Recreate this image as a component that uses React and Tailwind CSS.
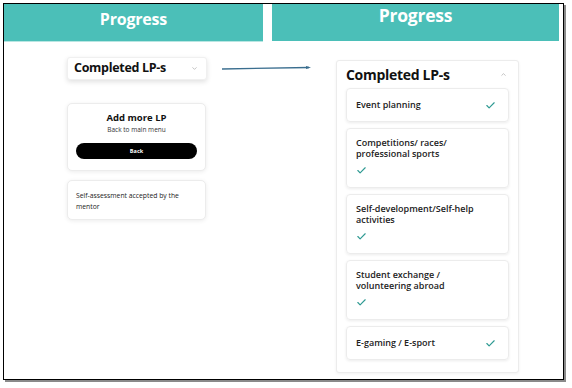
import { Check, ChevronDown, ChevronUp } from 'lucide-react';

const items = [
  { label: 'Event planning', inline: true },
  { label: ['Competitions/ races/', 'professional sports'] },
  { label: ['Self-development/Self-help', 'activities'] },
  { label: ['Student exchange /', 'volunteering abroad'] },
  { label: 'E-gaming / E-sport', inline: true },
];

const App = () => {
  return (
    <div className="relative w-[572px] h-[388px] bg-white font-['Open_Sans',sans-serif] overflow-hidden">
      <div className="absolute left-[3px] top-[3px] w-[561px] h-[377px] border border-black shadow-[2px_2px_0_#8a8a8a]" />
      <div className="relative flex pt-[4px] pl-[4px] gap-[9px]">
        {/* left mock */}
        <div className="w-[259px] flex flex-col">
          <div className="h-[38px] bg-[#4bbfb8] border-b border-[#b8e6e2] flex justify-center pt-[4px]">
            <span className="text-white font-bold text-[16px] leading-[22px] tracking-[-0.2px]">Progress</span>
          </div>
          <div className="pl-[63px] pt-[15px] flex flex-col">
            <div className="w-[140px] h-[23px] bg-white rounded-[3px] shadow-[0_2px_5px_rgba(0,0,0,0.12)] border border-[#f0f0f0] flex items-center justify-between pl-[6px] pr-[8px]">
              <span className="text-[12.5px] font-bold text-[#111] tracking-[-0.3px]">Completed LP-s</span>
              <ChevronDown size={7} className="text-[#999]" strokeWidth={2} />
            </div>
            <div className="mt-[23px] w-[139px] h-[68px] bg-white rounded-[5px] border border-[#ececec] shadow-[0_1px_4px_rgba(0,0,0,0.08)] flex flex-col items-center pt-[8px]">
              <span className="text-[9.5px] font-bold text-[#111] leading-[12px]">Add more LP</span>
              <span className="text-[6.5px] text-[#333] leading-[9px] mt-[1px]">Back to main menu</span>
              <div className="mt-[9px] w-[121px] h-[16px] rounded-full bg-black flex items-center justify-center">
                <span className="text-white text-[5.5px] font-bold">Back</span>
              </div>
            </div>
            <div className="mt-[9px] w-[139px] h-[40px] bg-white rounded-[5px] border border-[#ececec] shadow-[0_1px_4px_rgba(0,0,0,0.08)] px-[8px] pt-[9px]">
              <p className="text-[6.8px] leading-[11px] text-[#222]">Self-assessment accepted by the mentor</p>
            </div>
          </div>
        </div>

        {/* right mock */}
        <div className="w-[287px] flex flex-col">
          <div className="h-[37px] bg-[#4bbfb8] flex justify-center">
            <span className="text-white font-bold text-[17.5px] leading-[22px] tracking-[-0.2px]">Progress</span>
          </div>
          <div className="pl-[64px] pt-[19px]">
            <div className="w-[183px] bg-white border border-[#ececec] shadow-[0_1px_3px_rgba(0,0,0,0.06)] rounded-[3px] px-[9px] pb-[12px]">
              <div className="h-[27px] flex items-center justify-between pr-[2px]">
                <span className="text-[14px] font-bold text-[#111] tracking-[-0.3px]">Completed LP-s</span>
                <ChevronUp size={7} className="text-[#999]" strokeWidth={2} />
              </div>
              <div className="flex flex-col gap-[6px]">
                {items.map((it, i) =>
                  it.inline ? (
                    <div
                      key={i}
                      className="h-[34px] rounded-[4px] border border-[#ececec] shadow-[0_1px_3px_rgba(0,0,0,0.08)] flex items-center justify-between pl-[9px] pr-[12px]"
                    >
                      <span className="text-[9px] font-semibold text-[#222]">{it.label}</span>
                      <Check size={11} strokeWidth={2.5} className="text-[#2f9a93]" />
                    </div>
                  ) : (
                    <div
                      key={i}
                      className="h-[60px] rounded-[4px] border border-[#ececec] shadow-[0_1px_3px_rgba(0,0,0,0.08)] pl-[9px] pt-[9px] flex flex-col"
                    >
                      <p className="text-[9px] font-semibold text-[#222] leading-[10.5px]">
                        {it.label[0]}
                        <br />
                        {it.label[1]}
                      </p>
                      <Check size={11} strokeWidth={2.5} className="text-[#2f9a93] mt-[6px]" />
                    </div>
                  )
                )}
              </div>
            </div>
          </div>
        </div>
      </div>

      {/* connector arrow */}
      <svg className="absolute left-[221px] top-[64px]" width="92" height="9" viewBox="0 0 92 9">
        <line x1="1" y1="5" x2="88" y2="3.5" stroke="#3a6e8f" strokeWidth="1.3" />
        <path d="M85 2 L90 3.5 L85 5 Z" fill="#3a6e8f" />
      </svg>
    </div>
  );
};

export default App;
